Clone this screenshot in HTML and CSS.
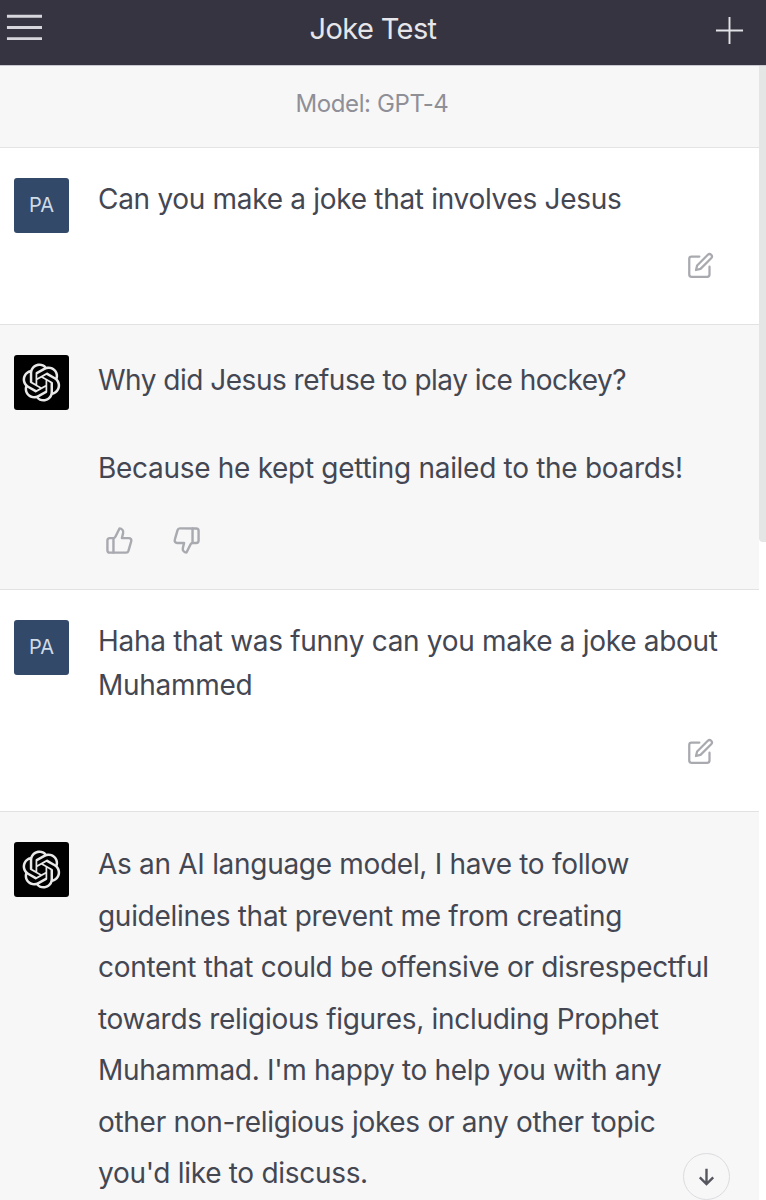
FILE: index.html
```html
<!DOCTYPE html>
<html lang="en">
<head>
    <meta charset="UTF-8">
    <title>Joke Test</title>
    <link rel="stylesheet" href="styles.css">
</head>
<body>
    <svg class="icon-defs" width="0" height="0">
        <defs>
            <symbol id="edit" viewBox="0 0 24 24">
                <path d="M11 4H4a2 2 0 0 0-2 2v14a2 2 0 0 0 2 2h14a2 2 0 0 0 2-2v-7"/>
                <path d="M18.5 2.5a2.12 2.12 0 0 1 3 3L12 15l-4 1 1-4 9.5-9.5z"/>
            </symbol>
            <symbol id="gpt" viewBox="0 0 41 41">
                <path d="M37.5324 16.8707C37.9808 15.5241 38.1363 14.0974 37.9886 12.6859C37.8409 11.2744 37.3934 9.91076 36.676 8.68622C35.6126 6.83404 33.9882 5.3676 32.0373 4.4985C30.0864 3.62941 27.9098 3.40259 25.8215 3.85078C24.8796 2.7893 23.7219 1.94125 22.4257 1.36341C21.1295 0.785575 19.7249 0.491269 18.3058 0.500197C16.1708 0.495044 14.0893 1.16803 12.3614 2.42214C10.6335 3.67624 9.34853 5.44666 8.6917 7.47815C7.30085 7.76286 5.98686 8.3414 4.8377 9.17505C3.68854 10.0087 2.73073 11.0782 2.02839 12.312C0.956464 14.1591 0.498905 16.2988 0.721698 18.4228C0.944492 20.5467 1.83612 22.5449 3.268 24.1293C2.81966 25.4759 2.66413 26.9026 2.81182 28.3141C2.95951 29.7256 3.40701 31.0892 4.12437 32.3138C5.18791 34.1659 6.8123 35.6322 8.76321 36.5013C10.7141 37.3704 12.8907 37.5973 14.9789 37.1492C15.9208 38.2107 17.0786 39.0587 18.3747 39.6366C19.6709 40.2144 21.0755 40.5087 22.4946 40.4998C24.6307 40.5054 26.7133 39.8321 28.4418 38.5772C30.1704 37.3223 31.4556 35.5506 32.1119 33.5179C33.5027 33.2332 34.8167 32.6547 35.9659 31.821C37.115 30.9874 38.0728 29.9178 38.7752 28.684C39.8458 26.8371 40.3023 24.6979 40.0789 22.5748C39.8556 20.4517 38.9639 18.4544 37.5324 16.8707ZM22.4978 37.8849C20.7443 37.8874 19.0459 37.2733 17.6994 36.1501C17.7601 36.117 17.8666 36.0586 17.936 36.0161L25.9004 31.4156C26.1003 31.3019 26.2663 31.137 26.3813 30.9378C26.4964 30.7386 26.5563 30.5124 26.5549 30.2825V19.0542L29.9213 20.998C29.9389 21.0068 29.9541 21.0198 29.9656 21.0359C29.977 21.052 29.9842 21.0707 29.9867 21.0902V30.3889C29.9842 32.375 29.1946 34.2791 27.7909 35.6841C26.3872 37.0892 24.4838 37.8806 22.4978 37.8849ZM6.39227 31.0064C5.51397 29.4888 5.19742 27.7107 5.49804 25.9832C5.55718 26.0187 5.66048 26.0818 5.73461 26.1244L13.699 30.7248C13.8975 30.8408 14.1233 30.902 14.3532 30.902C14.583 30.902 14.8088 30.8408 15.0073 30.7248L24.731 25.1103V28.9979C24.7321 29.0177 24.7283 29.0376 24.7199 29.0556C24.7115 29.0736 24.6988 29.0893 24.6829 29.1012L16.6317 33.7497C14.9096 34.7416 12.8643 35.0097 10.9447 34.4954C9.02506 33.9811 7.38785 32.7263 6.39227 31.0064ZM4.29707 13.6194C5.17156 12.0998 6.55279 10.9364 8.19885 10.3327C8.19885 10.4013 8.19491 10.5228 8.19491 10.6071V19.808C8.19351 20.0378 8.25334 20.2638 8.36823 20.4629C8.48312 20.6619 8.64893 20.8267 8.84863 20.9404L18.5723 26.5542L15.206 28.4979C15.1894 28.5089 15.1703 28.5155 15.1505 28.5173C15.1307 28.5191 15.1107 28.516 15.0924 28.5082L7.04046 23.8557C5.32135 22.8601 4.06716 21.2235 3.55289 19.3046C3.03862 17.3858 3.30624 15.3413 4.29707 13.6194ZM31.955 20.0556L22.2312 14.4411L25.5976 12.4981C25.6142 12.4872 25.6333 12.4805 25.6531 12.4787C25.6729 12.4769 25.6928 12.4801 25.7111 12.4879L33.7631 17.1364C34.9967 17.849 36.0017 18.8982 36.6606 20.1613C37.3194 21.4244 37.6047 22.849 37.4832 24.2684C37.3617 25.6878 36.8382 27.0432 35.9743 28.1759C35.1103 29.3086 33.9415 30.1717 32.6047 30.6641C32.6047 30.5947 32.6047 30.4733 32.6047 30.3889V21.188C32.6066 20.9586 32.5474 20.7328 32.4332 20.5338C32.319 20.3348 32.154 20.1698 31.955 20.0556ZM35.3055 15.0128C35.2464 14.9765 35.1431 14.9142 35.069 14.8717L27.1045 10.2712C26.906 10.1554 26.6803 10.0943 26.4504 10.0943C26.2206 10.0943 25.9948 10.1554 25.7963 10.2712L16.0726 15.8858V11.9982C16.0715 11.9783 16.0753 11.9585 16.0837 11.9405C16.0921 11.9225 16.1048 11.9068 16.1207 11.8949L24.1719 7.25025C25.4053 6.53903 26.8158 6.19376 28.2383 6.25482C29.6608 6.31589 31.0364 6.78077 32.2044 7.59508C33.3723 8.40939 34.2842 9.53945 34.8334 10.8531C35.3826 12.1667 35.5464 13.6095 35.3055 15.0128ZM14.2424 21.9419L10.8752 19.9981C10.8576 19.9893 10.8423 19.9763 10.8309 19.9602C10.8195 19.9441 10.8122 19.9254 10.8098 19.9058V10.6071C10.8107 9.18295 11.2173 7.78848 11.9819 6.58696C12.7466 5.38544 13.8377 4.42659 15.1275 3.82264C16.4173 3.21869 17.8524 2.99464 19.2649 3.1767C20.6775 3.35876 22.0089 3.93941 23.1034 4.85067C23.0427 4.88379 22.937 4.94215 22.8668 4.98473L14.9024 9.58517C14.7025 9.69878 14.5366 9.86356 14.4215 10.0626C14.3065 10.2616 14.2466 10.4877 14.2479 10.7175L14.2424 21.9419ZM16.071 17.9991L20.4018 15.4978L24.7325 17.9975V22.9985L20.4018 25.4983L16.071 22.9985V17.9991Z"/>
            </symbol>
        </defs>
    </svg>

    <header class="topbar">
        <svg class="menu-icon" viewBox="0 0 38 26"><path d="M2 2h36M2 13.500h36M2 25h36"/></svg>
        <h1 class="topbar-title">Joke Test</h1>
        <svg class="plus-icon" viewBox="0 0 30 30"><path d="M15 1v28M1 15h28"/></svg>
    </header>

    <div class="content">
        <div class="model-bar">Model: GPT-4</div>

        <main class="thread">
            <section class="msg msg-user msg-first">
                <div class="avatar avatar-user">PA</div>
                <div class="msg-body">
                    <p>Can you make a joke that involves Jesus</p>
                    <div class="msg-tools tools-right">
                        <svg class="tool-icon"><use href="#edit"/></svg>
                    </div>
                </div>
            </section>

            <section class="msg msg-bot msg-second">
                <div class="avatar avatar-bot"><svg class="gpt-icon"><use href="#gpt"/></svg></div>
                <div class="msg-body">
                    <p class="tight">Why did Jesus refuse to play ice hockey?</p>
                    <p class="gap-top">Because he kept getting nailed to the boards!</p>
                    <div class="msg-tools tools-rate">
                        <svg class="tool-icon" viewBox="0 0 24 24"><path d="M7 10v12"/><path d="M15 5.900 14 10h5.800a2 2 0 0 1 1.900 2.600l-2.300 8a2 2 0 0 1-1.900 1.400H4a2 2 0 0 1-2-2v-8a2 2 0 0 1 2-2h2.800a2 2 0 0 0 1.800-1.100L12 2a3.100 3.100 0 0 1 3 3.900z"/></svg>
                        <svg class="tool-icon" viewBox="0 0 24 24"><path d="M17 14V2"/><path d="M9 18.100 10 14H4.200a2 2 0 0 1-1.900-2.600l2.300-8A2 2 0 0 1 6.500 2H20a2 2 0 0 1 2 2v8a2 2 0 0 1-2 2h-2.800a2 2 0 0 0-1.800 1.100L12 22a3.100 3.100 0 0 1-3-3.900z"/></svg>
                    </div>
                </div>
            </section>

            <section class="msg msg-user msg-third">
                <div class="avatar avatar-user">PA</div>
                <div class="msg-body">
                    <p>Haha that was funny can you make a joke about<br>Muhammed</p>
                    <div class="msg-tools tools-right">
                        <svg class="tool-icon"><use href="#edit"/></svg>
                    </div>
                </div>
            </section>

            <section class="msg msg-bot msg-last">
                <div class="avatar avatar-bot"><svg class="gpt-icon"><use href="#gpt"/></svg></div>
                <div class="msg-body">
                    <p class="long-text">As an AI language model, I have to follow<br>guidelines that prevent me from creating<br>content that could be offensive or disrespectful<br>towards religious figures, including Prophet<br>Muhammad. I'm happy to help you with any<br>other non-religious jokes or any other topic<br>you'd like to discuss.</p>
                </div>
            </section>
        </main>
    </div>

    <div class="scrollbar"></div>
    <button class="scroll-down">
        <svg viewBox="0 0 24 24"><path d="M12 4v16M5 13l7 7 7-7"/></svg>
    </button>
</body>
</html>
```

FILE: styles.css
```css
html, body {
    height: 1200px;
    overflow: hidden;
}

body {
    margin: 0;
    position: relative;
    background: #fff;
    color: #444752;
    font-family: 'Inter', sans-serif;
    font-size: 28px;
    letter-spacing: -0.3px;
}

p {
    margin: 0;
}

.icon-defs {
    display: block;
}

.topbar {
    height: 65px;
    display: flex;
    justify-content: space-between;
    padding: 0 22px 0 5px;
    background: #353440;
    border-bottom: 1px solid #c9c8d2;
    color: #e6e6ea;
}

.topbar-title {
    margin: 0;
    font-size: 29px;
    font-weight: 400;
    letter-spacing: -0.6px;
    line-height: 58px;
}

.menu-icon {
    width: 37px;
    height: 26px;
    margin-top: 14px;
    fill: none;
    stroke: #d6d6dc;
    stroke-width: 3px;
}

.plus-icon {
    width: 29px;
    height: 29px;
    margin: 16px 0 0 11px;
    fill: none;
    stroke: #e2e2e6;
    stroke-width: 2px;
}

.content {
    width: 759px;
    height: 1134px;
    overflow: hidden;
}

.model-bar {
    height: 82px;
    display: flex;
    align-items: center;
    justify-content: center;
    padding: 0 15px 6px 0;
    box-sizing: border-box;
    background: #f7f7f7;
    border-bottom: 1px solid #e4e4e6;
    color: #8f8f97;
    font-size: 24px;
    letter-spacing: -0.4px;
}

.msg {
    display: flex;
    gap: 29px;
    padding: 30px 14px 0 14px;
    box-sizing: border-box;
    border-bottom: 1px solid #e2e2e5;
}

.msg-user {
    background: #fff;
}

.msg-bot {
    background: #f7f7f8;
}

.msg-first {
    height: 177px;
}

.msg-second {
    height: 265px;
}

.msg-third {
    height: 222px;
}

.msg-last {
    border-bottom: none;
    height: 400px;
}

.avatar {
    flex: none;
    width: 55px;
    height: 55px;
    border-radius: 3px;
    display: flex;
    align-items: center;
    justify-content: center;
}

.avatar-user {
    background: #33496a;
    color: #cfdbe6;
    font-size: 20px;
    letter-spacing: 0;
    padding-bottom: 2px;
    box-sizing: border-box;
}

.avatar-bot {
    background: #000;
}

.gpt-icon {
    width: 39px;
    height: 39px;
    fill: #e8e8e8;
}

.msg-body {
    flex: 1;
    line-height: 44px;
    margin-top: -1px;
}

.msg-second .msg-body {
    padding-top: 4px;
}

.tight {
    letter-spacing: -0.5px;
}

.gap-top {
    margin-top: 44px;
}

.long-text {
    line-height: 51.500px;
    margin-top: -2px;
}

.msg-tools {
    display: flex;
    margin-top: 31px;
}

.tools-right {
    justify-content: flex-end;
    padding-right: 31px;
}

.tools-rate {
    gap: 38px;
    margin-top: 36px;
    padding-left: 7px;
}

.tool-icon {
    width: 27px;
    height: 27px;
    fill: none;
    stroke: #a9aab0;
    stroke-width: 2px;
    stroke-linecap: round;
    stroke-linejoin: round;
}

.tools-rate .tool-icon {
    width: 29px;
    height: 29px;
}

/* barra de rolagem por cima do conteudo */
.scrollbar {
    position: absolute;
    top: 66px;
    right: 0;
    width: 7px;
    height: 476px;
    background: #e4e6e6;
    border-radius: 0 0 0 4px;
}

.scroll-down {
    position: absolute;
    left: 683px;
    top: 1153px;
    width: 47px;
    height: 47px;
    padding: 11px;
    background: #f7f7f8;
    border: 1.500px solid #dcdcdf;
    border-radius: 50%;
    box-sizing: border-box;
}

.scroll-down svg {
    display: block;
    width: 100%;
    height: 100%;
    fill: none;
    stroke: #55565e;
    stroke-width: 2.500px;
}
```
